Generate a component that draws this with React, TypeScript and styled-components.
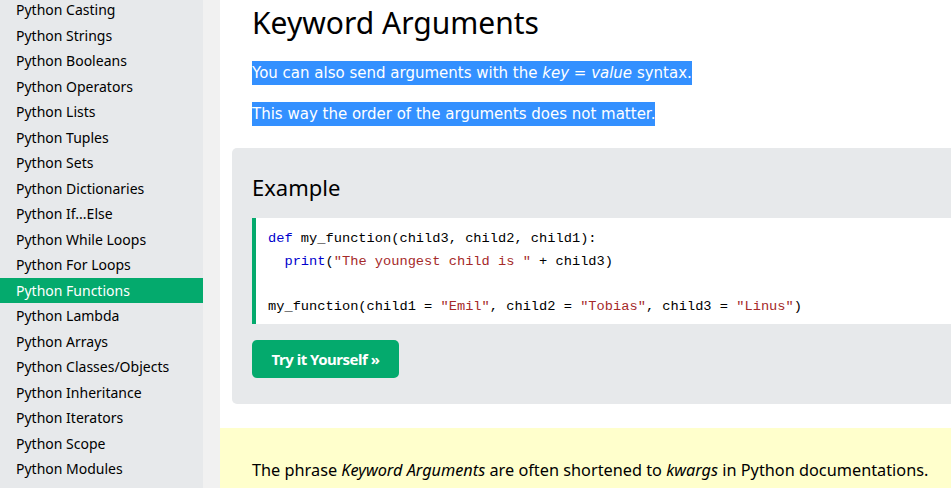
import React from "react";
import styled, { createGlobalStyle } from "styled-components";

const Global = createGlobalStyle`
  html, body { margin: 0; padding: 0; background: #fff; overflow: hidden; }
  body { width: 951px; height: 488px; }
`;

const Page = styled.div`
  display: flex;
  width: 951px;
  height: 488px;
  overflow: hidden;
`;

const Sidebar = styled.nav`
  width: 203px;
  flex: none;
  background: #e7e9eb;
  display: flex;
  flex-direction: column;
  margin-top: -3px;
  height: 600px;
`;

const Gutter = styled.div`
  width: 17px;
  flex: none;
  background: #f1f1f1;
`;

const NavItem = styled.a<{ $active?: boolean }>`
  display: block;
  height: 25.5px;
  line-height: 25.5px;
  padding-left: 16px;
  font-family: "Noto Sans", "Open Sans", sans-serif;
  font-size: 14px;
  color: ${(p) => (p.$active ? "#fff" : "#000")};
  background: ${(p) => (p.$active ? "#04aa6d" : "transparent")};
  text-decoration: none;
  white-space: nowrap;
`;

const Main = styled.main`
  flex: none;
  width: 900px;
  display: flex;
  flex-direction: column;
`;

const Content = styled.div`
  padding: 0 0 0 12px;
  display: flex;
  flex-direction: column;
`;

const Title = styled.h1`
  margin: 3px 0 0 20px;
  font-family: "Noto Sans", "Open Sans", sans-serif;
  font-weight: 400;
  font-size: 30px;
  line-height: 40px;
  color: #000;
`;

const Para = styled.p<{ $top: number }>`
  margin: ${(p) => p.$top}px 0 0 20px;
  font-family: "DejaVu Sans", Verdana, sans-serif;
  font-size: 15px;
  line-height: 23px;
`;

const Selected = styled.span`
  background: #3390ff;
  color: #fff;
  padding: 2.8px 0 2.8px;
`;

const Example = styled.section`
  margin-top: 22px;
  background: #e7e9eb;
  border-radius: 5px;
  padding: 20px 0 26px 20px;
  display: flex;
  flex-direction: column;
  align-items: flex-start;
`;

const ExampleTitle = styled.h2`
  margin: 3px 0 0;
  font-family: "Noto Sans", "Open Sans", sans-serif;
  font-weight: 400;
  font-size: 22px;
  line-height: 32px;
  color: #000;
`;

const Code = styled.pre`
  align-self: stretch;
  margin: 15px 0 0;
  background: #fff;
  border-left: 4px solid #04aa6d;
  padding: 10px 12px 4px;
  font-family: "Liberation Mono", "DejaVu Sans Mono", monospace;
  font-size: 13.7px;
  line-height: 22.5px;
  color: #000;
  height: 106px;
  box-sizing: border-box;
`;

const Kw = styled.span`
  color: #0000cd;
`;

const Str = styled.span`
  color: #a52a2a;
`;

const TryButton = styled.a`
  margin-top: 16px;
  display: inline-flex;
  align-items: center;
  justify-content: center;
  width: 147px;
  height: 38px;
  background: #04aa6d;
  border-radius: 5px;
  color: #fff;
  font-family: "Noto Sans", "Open Sans", sans-serif;
  font-weight: 700;
  font-size: 15px;
  letter-spacing: -0.5px;
  text-decoration: none;
`;

const Note = styled.div`
  margin-top: 24px;
  background: #ffffcc;
  padding: 30px 0 20px 32px;
  font-family: "Noto Sans", "Open Sans", sans-serif;
  font-size: 16.3px;
  line-height: 24px;
  color: #000;
  height: 80px;
  box-sizing: border-box;
  white-space: nowrap;
`;

const items = [
  "Python Casting",
  "Python Strings",
  "Python Booleans",
  "Python Operators",
  "Python Lists",
  "Python Tuples",
  "Python Sets",
  "Python Dictionaries",
  "Python If...Else",
  "Python While Loops",
  "Python For Loops",
  "Python Functions",
  "Python Lambda",
  "Python Arrays",
  "Python Classes/Objects",
  "Python Inheritance",
  "Python Iterators",
  "Python Scope",
  "Python Modules",
];

export default function App() {
  return (
    <>
      <Global />
      <Page>
        <Sidebar>
          {items.map((t) => (
            <NavItem key={t} $active={t === "Python Functions"}>
              {t}
            </NavItem>
          ))}
        </Sidebar>
        <Gutter />
        <Main>
          <Content>
            <Title>Keyword Arguments</Title>
            <Para $top={19}>
              <Selected>
                You can also send arguments with the <i>key</i> = <i>value</i> syntax.
              </Selected>
            </Para>
            <Para $top={18}>
              <Selected>This way the order of the arguments does not matter.</Selected>
            </Para>
            <Example>
              <ExampleTitle>Example</ExampleTitle>
              <Code>
                <Kw>def</Kw> my_function(child3, child2, child1):{"\n"}
                {"  "}
                <Kw>print</Kw>(<Str>"The youngest child is "</Str> + child3){"\n"}
                {"\n"}
                my_function(child1 = <Str>"Emil"</Str>, child2 = <Str>"Tobias"</Str>, child3 ={" "}
                <Str>"Linus"</Str>)
              </Code>
              <TryButton>Try it Yourself »</TryButton>
            </Example>
          </Content>
          <Note>
            The phrase <i>Keyword Arguments</i> are often shortened to <i>kwargs</i> in Python
            documentations.
          </Note>
        </Main>
      </Page>
    </>
  );
}
